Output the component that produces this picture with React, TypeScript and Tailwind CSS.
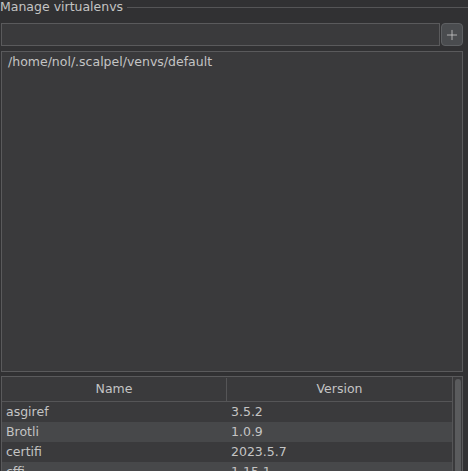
import { Plus } from "lucide-react";

const PACKAGES = [
  { name: "asgiref", version: "3.5.2" },
  { name: "Brotli", version: "1.0.9" },
  { name: "certifi", version: "2023.5.7" },
  { name: "cffi", version: "1.15.1" },
  { name: "charset-normalizer", version: "3.1.0" },
];

export default function App() {
  return (
    <div className="w-[468px] h-[471px] overflow-hidden bg-[#313133] text-[12.5px] text-[#c4c4c4] font-['DejaVu_Sans',sans-serif] leading-none">
      <div className="flex items-center gap-[4px] h-[15px]">
        <span className="whitespace-nowrap">Manage virtualenvs</span>
        <div className="flex-1 h-px bg-[#555557]" />
      </div>

      <div className="flex pl-[1px] pr-[5px] mt-[8px] gap-[1px]">
        <input className="flex-1 h-[23px] bg-[#3a3a3c] border border-[#5a5a5c] outline-none px-1" />
        <button className="w-[22px] h-[23px] rounded-[4px] bg-[#4a4c4f] border border-[#5e6063] flex items-center justify-center text-[#d4d4d4]">
          <Plus size={16} strokeWidth={1.1} />
        </button>
      </div>

      <div className="ml-[1px] mr-[5px] mt-[5px] h-[321px] bg-[#3a3a3c] border border-[#5a5a5c] px-[6px] pt-[4px]">
        /home/nol/.scalpel/venvs/default
      </div>

      <div className="ml-[1px] mr-[5px] mt-[4px] border border-[#5a5a5c] bg-[#3a3a3c] flex">
        <div className="flex-1">
          <div className="flex h-[25px] pt-[1px] border-b border-[#555557]">
            <div className="w-[225px] flex items-center justify-center border-r border-[#555557]">Name</div>
            <div className="flex-1 flex items-center justify-center">Version</div>
          </div>
          {PACKAGES.map((p, i) => (
            <div key={p.name} className={`flex h-[20px] pt-[1px] items-center ${i % 2 === 1 ? "bg-[#47484a]" : "bg-[#3a3a3c]"}`}>
              <div className="w-[225px] pl-[4px]">{p.name}</div>
              <div className="flex-1 pl-[4px]">{p.version}</div>
            </div>
          ))}
        </div>
        <div className="w-[10px] border-l border-[#555557] pt-[1px] flex justify-center">
          <div className="w-[6px] h-[200px] mt-[1px] rounded-[3px] bg-[#5a5b5d]" />
        </div>
      </div>
    </div>
  );
}
